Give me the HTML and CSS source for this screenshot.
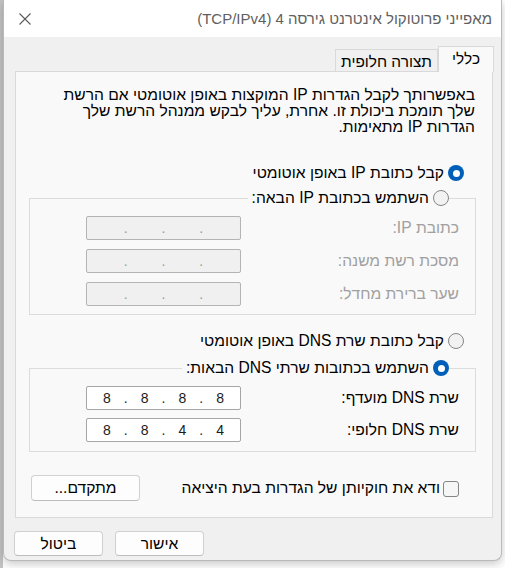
FILE: index.html
```html
<!DOCTYPE html>
<html lang="he" dir="rtl">
<head>
<meta charset="utf-8">
<title>מאפייני פרוטוקול אינטרנט גירסה 4 (TCP/IPv4)</title>
<link rel="stylesheet" href="styles.css">
</head>
<body>
<div class="dialog">
  <div class="titlebar">
    <span class="title">מאפייני פרוטוקול אינטרנט גירסה 4 (TCP/IPv4)</span>
    <span class="close"><svg width="12" height="12" viewBox="0 0 12 12"><path d="M0.5 0.5L11.5 11.5M11.5 0.5L0.5 11.5" stroke="#5a5a5a" stroke-width="1.1" fill="none"/></svg></span>
  </div>
  <div class="dbody">
    <div class="tabs">
      <div class="tab active">כללי</div>
      <div class="tab">תצורה חלופית</div>
    </div>
    <div class="panel">
      <p class="desc">באפשרותך לקבל הגדרות IP המוקצות באופן אוטומטי אם הרשת<br>שלך תומכת ביכולת זו. אחרת, עליך לבקש ממנהל הרשת שלך<br>הגדרות IP מתאימות.</p>

      <div class="opt first"><span class="radio checked"></span><span class="opt-text">קבל כתובת IP באופן אוטומטי</span></div>

      <fieldset class="group">
        <legend class="opt"><span class="radio"></span><span class="opt-text">השתמש בכתובת IP הבאה:</span></legend>
        <div class="row">
          <span class="lbl disabled">כתובת IP:</span>
          <div class="ip off" dir="ltr"><span class="oct"></span><span class="dot">.</span><span class="oct"></span><span class="dot">.</span><span class="oct"></span><span class="dot">.</span><span class="oct"></span></div>
        </div>
        <div class="row">
          <span class="lbl disabled">מסכת רשת משנה:</span>
          <div class="ip off" dir="ltr"><span class="oct"></span><span class="dot">.</span><span class="oct"></span><span class="dot">.</span><span class="oct"></span><span class="dot">.</span><span class="oct"></span></div>
        </div>
        <div class="row">
          <span class="lbl disabled">שער ברירת מחדל:</span>
          <div class="ip off" dir="ltr"><span class="oct"></span><span class="dot">.</span><span class="oct"></span><span class="dot">.</span><span class="oct"></span><span class="dot">.</span><span class="oct"></span></div>
        </div>
      </fieldset>

      <div class="opt second"><span class="radio"></span><span class="opt-text">קבל כתובת שרת DNS באופן אוטומטי</span></div>

      <fieldset class="group dns">
        <legend class="opt"><span class="radio checked"></span><span class="opt-text">השתמש בכתובות שרתי DNS הבאות:</span></legend>
        <div class="row">
          <span class="lbl">שרת DNS מועדף:</span>
          <div class="ip" dir="ltr"><span class="oct">8</span><span class="dot">.</span><span class="oct">8</span><span class="dot">.</span><span class="oct">8</span><span class="dot">.</span><span class="oct">8</span></div>
        </div>
        <div class="row">
          <span class="lbl">שרת DNS חלופי:</span>
          <div class="ip" dir="ltr"><span class="oct">8</span><span class="dot">.</span><span class="oct">8</span><span class="dot">.</span><span class="oct">4</span><span class="dot">.</span><span class="oct">4</span></div>
        </div>
      </fieldset>

      <div class="bottom">
        <div class="check"><span class="box"></span><span class="opt-text">ודא את חוקיותן של הגדרות בעת היציאה</span></div>
        <button class="btn adv">מתקדם...</button>
      </div>
    </div>
    <div class="actions">
      <button class="btn act">אישור</button>
      <button class="btn act">ביטול</button>
    </div>
  </div>
</div>
</body>
</html>
```

FILE: styles.css
```css
html, body {
  margin: 0;
  padding: 0;
}
body {
  width: 505px;
  height: 568px;
  overflow: hidden;
  background: linear-gradient(to right, #c4c4c4 0, #c4c4c4 3px, #ffffff 3px);
  font-family: "Liberation Sans", "DejaVu Sans", sans-serif;
  font-size: 15.6px;
  color: #000;
}
.dialog {
  margin: 0 auto 0 3px;
  width: 497px;
  border: 1px solid #b9b9b9;
  border-top: none;
  border-radius: 0 0 8px 8px;
  background: #f0f0f0;
  box-shadow: 0 3px 10px rgba(0,0,0,0.22);
  overflow: hidden;
}
.titlebar {
  height: 37px;
  background: #ffffff;
  display: flex;
  align-items: center;
  justify-content: space-between;
}
.title {
  padding-right: 9px;
  color: #5f5f5f;
  font-size: 15px;
}
.close {
  display: flex;
  margin-left: 15px;
  margin-top: 1px;
}
.dbody {
  padding: 9px 0 4px 0;
}
.tabs {
  display: flex;
  align-items: flex-end;
  height: 25px;
  margin-right: 7px;
}
.tab {
  box-sizing: border-box;
  height: 22px;
  width: 103px;
  border: 1px solid #d9d9d9;
  border-bottom: none;
  background: #f0f0f0;
  text-align: center;
  line-height: 24px;
  font-size: 15.4px;
}
.tab.active {
  position: relative;
  z-index: 1;
  width: 56px;
  height: 26px;
  margin-bottom: -1px;
  background: #f9f9f9;
  line-height: 24px;
}
.panel {
  box-sizing: border-box;
  margin: 0 8px 0 11px;
  height: 447px;
  border: 1px solid #d9d9d9;
  background: #f9f9f9;
  padding: 15px 0 0 0;
}
.desc {
  margin: 0 17px 0 0;
  line-height: 16px;
}
.opt {
  display: flex;
  align-items: center;
  height: 20px;
  gap: 4px;
}
.opt.first {
  margin: 28px 28px 0 0;
}
.opt.second {
  margin: 16px 28px 0 0;
}
.radio {
  box-sizing: border-box;
  width: 16px;
  height: 16px;
  border-radius: 50%;
  border: 1px solid #858585;
  background: #f2f2f2;
  display: inline-flex;
  align-items: center;
  justify-content: center;
  flex: none;
}
.radio.checked {
  border: none;
  background: #005fb8;
}
.radio.checked::after {
  content: "";
  width: 7px;
  height: 7px;
  border-radius: 50%;
  background: #ffffff;
}
.group {
  margin: 5px 16px 0 13px;
  padding: 8px 16px 8px 56px;
  border: 1px solid #dcdcdc;
  min-width: 0;
}
.group.dns {
  margin-top: 7px;
  padding-bottom: 9px;
}
.group legend {
  margin-right: 10px;
  padding: 0 0 0 4px;
}
.row {
  display: flex;
  align-items: center;
  justify-content: space-between;
  height: 24px;
  margin-bottom: 9px;
}
.dns .row {
  margin-bottom: 8px;
}
.row:last-child {
  margin-bottom: 0;
}
.lbl.disabled {
  color: #a0a0a0;
}
.ip {
  box-sizing: border-box;
  width: 155px;
  height: 24px;
  border: 1px solid #a6a6a6;
  border-radius: 2px;
  background: #ffffff;
  display: flex;
  align-items: center;
  padding: 0 1px;
  font-size: 14px;
  color: #1a1a1a;
}
.ip.off {
  background: #f0f0f0;
  border-color: #b4b4b4;
  color: #9a9a9a;
}
.oct {
  flex: 1;
  text-align: center;
}
.dot {
  width: 0;
  display: flex;
  justify-content: center;
  font-size: 14px;
}
.bottom {
  display: flex;
  align-items: center;
  justify-content: space-between;
  margin: 23px 33px 0 15px;
  height: 26px;
}
.check {
  display: flex;
  align-items: center;
  gap: 3px;
}
.box {
  box-sizing: border-box;
  width: 16px;
  height: 16px;
  border: 1px solid #858585;
  border-radius: 3px;
  background: #f6f6f6;
  margin-top: 2px;
}
.btn {
  box-sizing: border-box;
  font-family: "Liberation Sans", "DejaVu Sans", sans-serif;
  font-size: 15.6px;
  color: #000;
  background: #fdfdfd;
  border: 1px solid #d0d0d0;
  border-bottom-color: #bdbdbd;
  border-radius: 4px;
  padding: 0;
}
.btn.adv {
  width: 109px;
  height: 26px;
}
.actions {
  display: flex;
  justify-content: flex-end;
  gap: 12px;
  margin: 13px 0 0 10px;
}
.btn.act {
  width: 89px;
  height: 25px;
}
```
